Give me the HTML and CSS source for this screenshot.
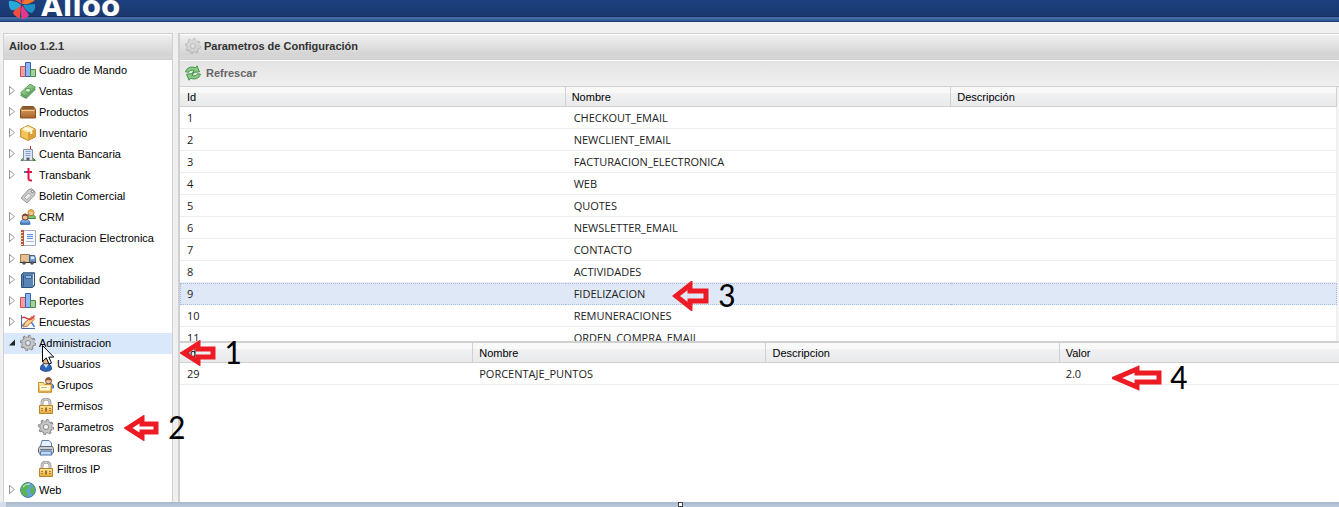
FILE: index.html
```html
<!DOCTYPE html>
<html lang="es">
<head>
    <meta charset="UTF-8">
    <meta name="viewport" content="width=device-width, initial-scale=1.0">
    <title>Ailoo - Parametros de Configuración</title>
    <link rel="stylesheet" href="styles.css">
</head>
<body>
    <svg class="sprite" aria-hidden="true">
        <linearGradient id="gGreen" x2="1" y2="1"><stop stop-color="#b9e3b0"/><stop offset="1" stop-color="#4d9c4c"/></linearGradient>
        <linearGradient id="gGold" x2="0" y2="1"><stop stop-color="#fbe9a4"/><stop offset="1" stop-color="#e2a83a"/></linearGradient>
        <linearGradient id="gBlue" x2="0" y2="1"><stop stop-color="#a9cdf5"/><stop offset="1" stop-color="#3c74c0"/></linearGradient>
        <linearGradient id="gBrown" x2="0" y2="1"><stop stop-color="#e2a566"/><stop offset="1" stop-color="#a9642b"/></linearGradient>
        <symbol id="chart" viewBox="0 0 16 16">
            <path d="M.5 4.500h5v10h-5z" fill="#f4a19b" stroke="#d0504b"/>
            <path d="M5.500.5h5v14h-5z" fill="#8db9f3" stroke="#3562b5"/>
            <path d="M10.500 7.500h5v7h-5z" fill="#a5d3a0" stroke="#4c8a4e"/>
        </symbol>
        <symbol id="money" viewBox="0 0 16 16">
            <path d="M.6 12.300 10 3.500l5.400 2.800L6 15.400z" fill="#6fae69" stroke="#4f9150"/>
            <path d="M.6 9.700 10 1.200l5.400 3L6 13.300z" fill="url(#gGreen)" stroke="#5fa160"/>
            <ellipse cx="8" cy="7.300" rx="2.500" ry="2" fill="#dcf1d5" stroke="#579d55"/>
        </symbol>
        <symbol id="box" viewBox="0 0 16 16">
            <path d="M2.500 2.500h11l2 3v8.500h-15V5.500z" fill="url(#gBrown)" stroke="#87501f"/>
            <path d="M2.500 3h11l1.500 2.500H1z" fill="#8a5c34"/>
            <path d="M1.500 6.500h13" stroke="#f6c991"/>
        </symbol>
        <symbol id="package" viewBox="0 0 16 16">
            <path d="M8 .6 15.300 4v8L8 15.400.7 12V4z" fill="#f3c45c" stroke="#b98422"/>
            <path d="M8 1.200 14.700 4.300 8 7.600 1.300 4.300z" fill="#fdf0c2"/>
            <path d="M8 7.600 14.700 4.300v7.300L8 14.800z" fill="#dda036"/>
            <path d="m4.500 2.600 6.800 3.400v3" fill="none" stroke="#fffbe4" stroke-width="2"/>
        </symbol>
        <symbol id="bank" viewBox="0 0 16 16">
            <path d="M1 14.500 3 12h10l2.500 2.500z" fill="#70ac56" stroke="#4b8b3e"/>
            <path d="M3.500 3.500h9v11h-9z" fill="#dfe6ef" stroke="#8a929e"/>
            <path d="M5.500 5.500h5M5.500 7.500h5M5.500 9.500h5" stroke="#7fa3da"/>
            <path d="M6.500 11.500h3v3h-3z" fill="#555e70"/>
            <path d="M10.500 0v3" stroke="#c52a2a"/>
        </symbol>
        <symbol id="transbank" viewBox="0 0 16 16">
            <path d="M8.500 1v10.500q0 2.500 3.500 2M5.500 5H12" fill="none" stroke="#db1646" stroke-width="2"/>
            <path d="M4 4h2v2H4z" fill="#2d86c8"/>
        </symbol>
        <symbol id="tag" viewBox="0 0 16 16">
            <path d="m1 10 7.500-8.500L12 .8 15.200 4l-.5 3L7 15z" fill="#c9cbcd" stroke="#999c9f"/>
            <path d="m4.500 9.500 4-4.500 2.500 2.500-4.200 4.400z" fill="#eeefef" stroke="#a2a4a6"/>
            <circle cx="12.500" cy="3.500" r="1.200" fill="#fff" stroke="#777"/>
        </symbol>
        <symbol id="people" viewBox="0 0 16 16">
            <path d="M6.500 9.500c0-3 2-4 4.500-4s4.500 1 4.500 4z" fill="#7fc36d" stroke="#458c3e"/>
            <circle cx="11" cy="3.700" r="3" fill="#f2c698" stroke="#b07b34"/>
            <path d="M8 3.500C8-.5 14-.5 14 3.500 12.500 2 10 2 8 3.500" fill="#e1a637"/>
            <path d="M.5 15.300c0-4 2-5 4.700-5s4.700 1 4.700 5z" fill="url(#gBlue)" stroke="#356aa9"/>
            <circle cx="5.200" cy="8" r="3" fill="#efbd91" stroke="#79442b"/>
            <path d="M2.200 8c0-4.500 6-4.500 6 0C6.500 6.300 4 6.300 2.200 8" fill="#83482e"/>
        </symbol>
        <symbol id="report" viewBox="0 0 16 16">
            <path d="M1.500.5h14v15h-14z" fill="#f6f9fe" stroke="#a6adb8"/>
            <path d="M1 0h3v16H1z" fill="#b35b37"/>
            <path d="M0 2.500h3M0 5.500h3M0 8.500h3M0 11.500h3M0 14.500h3" stroke="#f7d9c9"/>
            <path d="M7 4h6v5H7z" fill="#6597e8"/>
            <path d="M7 5.500h6M7 7.500h6" stroke="#dbe8fd"/>
            <path d="M6 11.500h8" stroke="#a5b6cf"/>
        </symbol>
        <symbol id="truck" viewBox="0 0 16 16">
            <path d="M.5 3.500h9v8h-9z" fill="#e6c08c" stroke="#a37a4b"/>
            <path d="M9.500 4.500h5l1 3v4h-6z" fill="#7397cf" stroke="#405c91"/>
            <path d="M11 5.500h3l.5 2.500H11z" fill="#e2f0fd"/>
            <path d="M0 11.500h16" stroke="#333"/>
            <circle cx="4" cy="12" r="1.800" fill="#555"/><circle cx="12" cy="12" r="1.800" fill="#555"/>
        </symbol>
        <symbol id="book" viewBox="0 0 16 16">
            <path d="M1.500 2.500 3 .8h11.500v13l-2 1.700h-11z" fill="#5985b4" stroke="#2e4e73"/>
            <path d="M3.500 2.500v12" stroke="#2f5885"/>
            <path d="M5.500 3.500h6v3h-6z" fill="#99bbdf" stroke="#3f6793"/>
            <path d="M13.500 2v11" stroke="#dce7f2"/>
        </symbol>
        <symbol id="survey" viewBox="0 0 16 16">
            <path d="M1.500 1v13.500H15" fill="none" stroke="#456aa2"/>
            <path d="m2 12 4-4 4-2 4.500 7" fill="none" stroke="#4480d0" stroke-width="1.500"/>
            <path d="m3 13 2-4.500L12 2.500l2.500 2.700L7.500 12z" fill="#f8cf8c" stroke="#c9703a"/>
            <path d="M2 4c4-4 6 7 12.500-2.500" fill="none" stroke="#d94343" stroke-width="1.500"/>
        </symbol>
        <symbol id="gear" viewBox="0 0 16 16">
            <circle cx="8" cy="8" r="6.700" fill="none" stroke="#808080" stroke-width="2.600" stroke-dasharray="2.600 2.662"/>
            <circle cx="8" cy="8" r="4.300" fill="none" stroke="#868686" stroke-width="4.600"/>
            <circle cx="8" cy="8" r="6.200" fill="none" stroke="#c4c4c4" stroke-width="1.600" stroke-dasharray="1.800 3.070" stroke-dashoffset="-.3"/>
            <circle cx="8" cy="8" r="4.300" fill="none" stroke="#c6c6c6" stroke-width="2.900"/>
        </symbol>
        <symbol id="user" viewBox="0 0 16 16">
            <path d="M2.500 13c0-4 2-5.500 5.500-5.500s5.500 1.500 5.500 5.500c-1 3-10 3-11 0" fill="#2f67b8" stroke="#1d437f"/>
            <path d="m5.500 8 2.500 4 2.500-4z" fill="#d5e6fb"/>
            <circle cx="8" cy="4.500" r="3.500" fill="#e5b78f" stroke="#5b4536"/>
            <path d="M4.500 4C5-.5 11-.5 11.500 4 9 2.500 7 2.500 4.500 4" fill="#4b4544"/>
        </symbol>
        <symbol id="group" viewBox="0 0 16 16">
            <path d="M6.500 9c0-3.500 9-3.500 9 0v2h-9z" fill="#699fe0" stroke="#3969a8"/>
            <circle cx="10.500" cy="3.800" r="3" fill="#f0c49a" stroke="#8a5430"/>
            <path d="M7.500 4c0-5 6-5 6 0-2-1.500-4-1.500-6 0" fill="#8a5430"/>
            <path d="M.5 5.500h5l1 2h7v7.800H.5z" fill="url(#gGold)" stroke="#c78f30"/>
            <path d="M2 8.500h10v5H2z" fill="#fffbe0"/><path d="M3 10.500h6" stroke="#d9b865"/>
        </symbol>
        <symbol id="lock" viewBox="0 0 16 16">
            <path d="M4 8V4.500c0-4.500 8-4.500 8 0V8" fill="none" stroke="#9a9a9a" stroke-width="2.800"/>
            <path d="M4 8V4.500c0-4.500 8-4.500 8 0V8" fill="none" stroke="#e2e2e2"/>
            <path d="M1.500 7.500h13v8h-13z" fill="url(#gGold)" stroke="#bb8425"/>
            <path d="M3 10.500h2M3 12.500h2M11 10.500h2M11 12.500h2" stroke="#b27c28"/>
            <path d="M7 9.500h2v4H7z" fill="#a56e22"/>
        </symbol>
        <symbol id="printer" viewBox="0 0 16 16">
            <path d="M2.500 6 4 .5h7L13.500 3v5h-11z" fill="#e4f0fd" stroke="#5d7ea9"/>
            <path d="m1.500 6.500-1 2v4l1.500 1h12l1.500-1v-4l-1-2z" fill="#c7cbd2" stroke="#666c76"/>
            <path d="M2 9.500h12" stroke="#727985"/>
            <path d="M3 11h10l1 4H2z" fill="#b9d7fb" stroke="#4b6f9f"/>
        </symbol>
        <symbol id="globe" viewBox="0 0 16 16">
            <circle cx="8" cy="8" r="7.400" fill="#5fa2dc" stroke="#47779e"/>
            <path d="M2 4q3-4 8-2.500L8 4l2 2-3 1-1 3 2 1-1 4Q0 13 1 6zM11 5l3-1q2 5-1.500 9L10 10z" fill="#5bb453"/>
            <path d="M3 5q3-3.500 7-3" fill="none" stroke="#d9f2d6"/>
        </symbol>
        <symbol id="refresh" viewBox="0 0 16 16">
            <path d="M.5 6.800C2 2.500 6 1 10.500 2.800L12 .8l2.500 6-7 .8 1.600-2C6.500 4.600 4.500 5.300 3.500 7.300z" fill="#8acb82" stroke="#3b8b43" stroke-width=".9"/>
            <path d="M15.500 9.200C14 13.500 10 15 5.500 13.200L4 15.200l-2.500-6 7-.8-1.600 2c2.600 1 4.600.3 5.600-1.700z" fill="#8acb82" stroke="#3b8b43" stroke-width=".9"/>
        </symbol>
    </svg>

    <header class="topbar">
        <svg class="logo-mark" viewBox="0 0 28 28" aria-hidden="true">
            <path d="M14 13 3 7q2-5 7-5z" fill="#ef5a46"/>
            <path d="m14 13-1-12h7q0 6-6 12" fill="#e63f78"/>
            <path d="m14 13 6-9q5 0 7 5-5 5-13 4" fill="#f4762b"/>
            <path d="m15 14 12-1q1 6-3 9-6-1-9-8" fill="#1c8fc4"/>
            <path d="m14 14 7 10q-2 4-7 4-2-7 0-14" fill="#e43a8d"/>
            <path d="m13 14-1 13q-5-1-7-5 2-6 8-8" fill="#f0503c"/>
            <path d="M13 13.500Q9 20 3 19 0 15 1 10q6-1 12 3.500" fill="#2aa9d8"/>
        </svg>
        <span class="logo-text">Ailoo</span>
    </header>

    <div class="workspace">
        <nav class="panel sidebar">
            <h2 class="panel-title">Ailoo 1.2.1</h2>
            <ul class="tree">
                <li><a href="#"><i class="twisty none"></i><svg class="icon"><use href="#chart"/></svg>Cuadro de Mando</a></li>
                <li><a href="#"><i class="twisty"></i><svg class="icon"><use href="#money"/></svg>Ventas</a></li>
                <li><a href="#"><i class="twisty"></i><svg class="icon"><use href="#box"/></svg>Productos</a></li>
                <li><a href="#"><i class="twisty"></i><svg class="icon"><use href="#package"/></svg>Inventario</a></li>
                <li><a href="#"><i class="twisty"></i><svg class="icon"><use href="#bank"/></svg>Cuenta Bancaria</a></li>
                <li><a href="#"><i class="twisty"></i><svg class="icon"><use href="#transbank"/></svg>Transbank</a></li>
                <li><a href="#"><i class="twisty none"></i><svg class="icon"><use href="#tag"/></svg>Boletin Comercial</a></li>
                <li><a href="#"><i class="twisty"></i><svg class="icon"><use href="#people"/></svg>CRM</a></li>
                <li><a href="#"><i class="twisty"></i><svg class="icon"><use href="#report"/></svg>Facturacion Electronica</a></li>
                <li><a href="#"><i class="twisty"></i><svg class="icon"><use href="#truck"/></svg>Comex</a></li>
                <li><a href="#"><i class="twisty"></i><svg class="icon"><use href="#book"/></svg>Contabilidad</a></li>
                <li><a href="#"><i class="twisty"></i><svg class="icon"><use href="#chart"/></svg>Reportes</a></li>
                <li><a href="#"><i class="twisty"></i><svg class="icon"><use href="#survey"/></svg>Encuestas</a></li>
                <li>
                    <a href="#" class="selected"><i class="twisty open"></i><svg class="icon"><use href="#gear"/></svg>Administracion</a>
                    <ul>
                        <li><a href="#"><svg class="icon"><use href="#user"/></svg>Usuarios</a></li>
                        <li><a href="#"><svg class="icon"><use href="#group"/></svg>Grupos</a></li>
                        <li><a href="#"><svg class="icon"><use href="#lock"/></svg>Permisos</a></li>
                        <li><a href="#"><svg class="icon"><use href="#gear"/></svg>Parametros</a></li>
                        <li><a href="#"><svg class="icon"><use href="#printer"/></svg>Impresoras</a></li>
                        <li><a href="#"><svg class="icon"><use href="#lock"/></svg>Filtros IP</a></li>
                    </ul>
                </li>
                <li><a href="#"><i class="twisty"></i><svg class="icon"><use href="#globe"/></svg>Web</a></li>
            </ul>
        </nav>

        <main class="panel content">
            <h1 class="panel-title"><svg class="icon faded"><use href="#gear"/></svg>Parametros de Configuración</h1>
            <div class="toolbar">
                <button type="button"><svg class="icon"><use href="#refresh"/></svg>Refrescar</button>
            </div>
            <div class="grids">
                <div class="grid-wrap params">
                    <table class="grid">
                        <thead>
                            <tr><th>Id</th><th>Nombre</th><th>Descripción</th></tr>
                        </thead>
                        <tbody>
                            <tr><td>1</td><td>CHECKOUT_EMAIL</td><td></td></tr>
                            <tr><td>2</td><td>NEWCLIENT_EMAIL</td><td></td></tr>
                            <tr><td>3</td><td>FACTURACION_ELECTRONICA</td><td></td></tr>
                            <tr><td>4</td><td>WEB</td><td></td></tr>
                            <tr><td>5</td><td>QUOTES</td><td></td></tr>
                            <tr><td>6</td><td>NEWSLETTER_EMAIL</td><td></td></tr>
                            <tr><td>7</td><td>CONTACTO</td><td></td></tr>
                            <tr><td>8</td><td>ACTIVIDADES</td><td></td></tr>
                            <tr class="selected"><td>9</td><td>FIDELIZACION</td><td></td></tr>
                            <tr><td>10</td><td>REMUNERACIONES</td><td></td></tr>
                            <tr><td>11</td><td>ORDEN_COMPRA_EMAIL</td><td></td></tr>
                        </tbody>
                    </table>
                </div>
                <div class="grid-wrap values">
                    <table class="grid">
                        <thead>
                            <tr><th>Id</th><th>Nombre</th><th>Descripcion</th><th>Valor</th></tr>
                        </thead>
                        <tbody>
                            <tr><td>29</td><td>PORCENTAJE_PUNTOS</td><td></td><td>2.0</td></tr>
                        </tbody>
                    </table>
                </div>
            </div>
        </main>
    </div>

    <footer class="bottom-edge"><span class="handle"></span></footer>

    <!-- pasos de la guia -->
    <div class="step step1">
        <svg width="36" height="26" viewBox="0 0 36 26"><path d="M4 13 18 4v5h15v8H18v5z"/></svg><span>1</span>
    </div>
    <div class="step step2">
        <svg width="36" height="26" viewBox="0 0 36 26"><path d="M4 13 18 4v5h14v8H18v5z"/></svg><span>2</span>
    </div>
    <div class="step step3">
        <svg width="38" height="30" viewBox="0 0 38 30"><path d="M4 15 18 4v6h16v10H18v6z"/></svg><span>3</span>
    </div>
    <div class="step step4">
        <svg width="50" height="26" viewBox="0 0 50 26"><path d="M4 13 25 4v4h22v9H25v5z"/></svg><span>4</span>
    </div>
    <svg class="cursor" viewBox="0 0 12 20"><path d="M.5.5v16l3.800-3.600 2.700 6.200 2.500-1-2.700-6h5z" fill="#fff" stroke="#000"/></svg>
</body>
</html>
```
FILE: styles.css
```css
* {
    box-sizing: border-box;
}
body {
    margin: 0;
    height: 100vh;
    display: flex;
    flex-direction: column;
    position: relative;
    overflow: hidden;
    background: #f0f0f0;
    font-family: Arial, "Liberation Sans", sans-serif;
    font-size: 11px;
    color: #000;
}
.sprite {
    position: absolute;
    width: 0;
    height: 0;
}
.icon {
    width: 16px;
    height: 16px;
    flex: none;
}
.faded {
    opacity: 0.4;
}

/* cabecera */
.topbar {
    flex: none;
    height: 22px;
    display: flex;
    align-items: flex-end;
    padding-left: 8px;
    overflow: hidden;
    background: linear-gradient(#1d3f7f, #1b396f 16px, #152d5c 16px, #152d5c 17px, #4c74ac 17px, #2e548f 21px, #1c3f79 21px);
}
.logo-mark {
    width: 28px;
    height: 28px;
    margin-bottom: 3px;
}
.logo-text {
    margin-left: 5px;
    font-family: "DejaVu Sans", sans-serif;
    font-weight: bold;
    font-size: 28px;
    line-height: 30px;
    color: #fff;
}

/* paneles */
.workspace {
    flex: 1;
    min-height: 0;
    display: flex;
    gap: 5px;
    padding: 11px 0 0 3px;
}
.panel {
    min-height: 0;
    display: flex;
    flex-direction: column;
    background: #fff;
    border: 1px solid #d0d0d0;
    border-bottom: 0;
}
.sidebar {
    flex: none;
    width: 170px;
}
.content {
    flex: 1;
    min-width: 0;
    border-left-width: 2px;
    border-right: 0;
}
.panel-title {
    flex: none;
    display: flex;
    align-items: center;
    gap: 3px;
    height: 26px;
    margin: 0;
    padding: 0 5px 2px;
    border-top: 1px solid #fff;
    border-bottom: 1px solid #d0d0d0;
    background: linear-gradient(#f0f0f0, #d4d4d4 80%, #d7d7d7);
    font-size: 11px;
    font-weight: bold;
    color: #333;
}

/* arbol */
.tree, .tree ul {
    margin: 0;
    padding: 0;
    list-style: none;
}
.tree a {
    display: flex;
    align-items: center;
    gap: 3px;
    height: 21px;
    padding: 0 0 2px 5px;
    color: #000;
    text-decoration: none;
    white-space: nowrap;
}
.tree ul a {
    padding-left: 34px;
}
.tree a:hover {
    background: #efefef;
}
.tree a.selected {
    background: #d9e8fb;
}
.twisty {
    position: relative;
    width: 8px;
    height: 10px;
}
.twisty::before {
    content: "";
    position: absolute;
    inset: 0;
    background: #999;
    clip-path: polygon(0 0, 6px 5px, 0 10px, 0 0, 1px 2px, 1px 8px, 5px 5px, 1px 2px);
}
.twisty.open::before {
    background: #222;
    clip-path: polygon(6px 2px, 6px 8px, 0 8px);
}
.twisty.none::before {
    display: none;
}

/* barra */
.toolbar {
    flex: none;
    height: 27px;
    display: flex;
    align-items: center;
    padding: 0 0 2px 5px;
    border-top: 1px solid #fff;
    border-bottom: 1px solid #d0d0d0;
    background: linear-gradient(#e4e4e4, #efefef);
}
.toolbar button {
    display: flex;
    align-items: center;
    gap: 5px;
    padding: 0;
    border: 0;
    background: none;
    font: bold 11px Arial, "Liberation Sans", sans-serif;
    color: #666;
    cursor: pointer;
}

/* grillas */
.grids {
    flex: 1;
    min-height: 0;
    display: grid;
    grid-template-rows: 19fr 12fr;
}
.grid-wrap {
    min-height: 0;
    overflow: hidden;
}
.params {
    padding-right: 2px;
    background: #f3f3f3;
}
.values {
    border-top: 2px solid #d0d0d0;
}
.grid {
    width: 100%;
    table-layout: fixed;
    border-collapse: separate;
    border-spacing: 0;
    background: #fff;
}
.grid th {
    height: 20px;
    padding: 0 6px;
    border-right: 1px solid #d0d0d0;
    border-bottom: 1px solid #d0d0d0;
    background: linear-gradient(#f9f9f9 6px, #f0f1f3 6px, #e8eaec);
    font-weight: normal;
    text-align: left;
}
.grid th:first-child, .grid td:first-child {
    padding-left: 7px;
}
.grid td {
    height: 22px;
    padding: 0 6px;
    border-bottom: 1px solid #ededed;
    font-family: "Segoe UI", "Open Sans", sans-serif;
    line-height: 16px;
    color: #222;
}
.params td {
    padding: 0 8px;
}
.params td:last-child {
    border-right: 1px solid #ededed;
}
.params .selected td {
    border-top: 1px dotted #a3bae9;
    border-bottom: 1px dotted #a3bae9;
    background: #dfe8f6;
}
.params .selected td:first-child {
    border-left: 1px dotted #a3bae9;
    padding-left: 6px;
}
.params .selected td:last-child {
    border-right: 1px dotted #a3bae9;
}
.values th {
    width: 25.3%;
}
.values th:last-child {
    width: auto;
    border-right: 0;
}

.bottom-edge {
    flex: none;
    position: relative;
    height: 5px;
    border-left: 6px solid #d5deea;
    background: linear-gradient(#a9b8cf, #bccadd);
}
.handle {
    position: absolute;
    left: 672px;
    top: 0;
    width: 5px;
    height: 5px;
    border: 1px solid #444;
    background: #fff;
}

/* flechas y numeros encima de la pantalla */
.step {
    position: absolute;
    display: flex;
    align-items: center;
    gap: 8px;
    font-family: Calibri, Lato, sans-serif;
    font-size: 34px;
    line-height: 32px;
    pointer-events: none;
}
.step path {
    fill: none;
    stroke: #ed1c24;
    stroke-width: 5px;
}
.step1 {
    left: 180px;
    top: 337px;
}
.step2 {
    left: 124px;
    top: 412px;
}
.step3 {
    left: 672px;
    top: 280px;
}
.step4 {
    left: 1112px;
    top: 362px;
}
.cursor {
    position: absolute;
    left: 42px;
    top: 345px;
    width: 12px;
    height: 20px;
}
```
